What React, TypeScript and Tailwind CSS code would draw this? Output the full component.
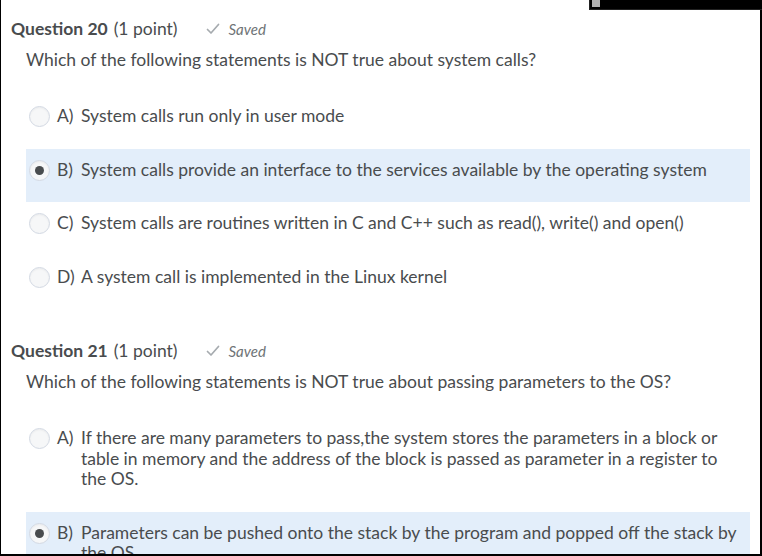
import React from "react";

const font = { fontFamily: "Lato, 'Noto Sans', sans-serif" };

function Check() {
  return (
    <svg width="14" height="14" viewBox="0 0 14 14" className="mr-[9px]">
      <path d="M1.5 7.5 L5 11 L12.5 2.5" fill="none" stroke="#a6abaf" strokeWidth="1.7" strokeLinecap="round" strokeLinejoin="round" />
    </svg>
  );
}

function Radio({ checked }: { checked?: boolean }) {
  return (
    <div className="h-[20px] shrink-0">
      <div className="w-[21px] h-[21px] rounded-full border border-[#d3d9e3] bg-[#f6f7f8] flex items-center justify-center shadow-[inset_0_1px_2px_rgba(0,0,0,0.05)]">
        {checked && <div className="w-[9px] h-[9px] rounded-full bg-[#494c4e]" />}
      </div>
    </div>
  );
}

function Option({ letter, text, checked }: { letter: string; text: string; checked?: boolean }) {
  return (
    <div className={`flex items-start pl-[3px] pr-[10px] pt-[11px] pb-[22px] ${checked ? "bg-[#e3eefa]" : ""}`}>
      <Radio checked={checked} />
      <div className="ml-[7px] w-[24px] shrink-0 leading-[20.5px]">{letter}</div>
      <div className="leading-[20.5px]">{text}</div>
    </div>
  );
}

function Question({ num, text, options, checked }: { num: number; text: string; options: [string, string][]; checked: number }) {
  return (
    <div>
      <div className="flex items-center pl-[10px] h-[24px]">
        <span className="text-[17.5px] font-bold text-[#494c4e]">Question {num}</span>
        <span className="text-[17.5px] text-[#494c4e] ml-[6px]">(1 point)</span>
        <span className="ml-[28px] flex items-center">
          <Check />
          <span className="italic text-[15px] text-[#6e7376]">Saved</span>
        </span>
      </div>
      <div className="pl-[25px] mt-[9px] text-[17.5px] leading-[20px] text-[#494c4e]">{text}</div>
      <div className="ml-[25px] mr-[10px] mt-[25px] text-[17.5px] text-[#494c4e]">
        {options.map(([l, t], i) => (
          <Option key={l} letter={l} text={t} checked={i === checked} />
        ))}
      </div>
    </div>
  );
}

export default function App() {
  return (
    <div className="w-[762px] h-[556px] bg-black relative overflow-hidden" style={font}>
      <div className="ml-[1px] mr-[2px] h-[554px] bg-white overflow-hidden pt-[17px]">
        <Question
          num={20}
          text="Which of the following statements is NOT true about system calls?"
          checked={1}
          options={[
            ["A)", "System calls run only in user mode"],
            ["B)", "System calls provide an interface to the services available by the operating system"],
            ["C)", "System calls are routines written in C and C++ such as read(), write() and open()"],
            ["D)", "A system call is implemented in the Linux kernel"],
          ]}
        />
        <div className="h-[30px]" />
        <Question
          num={21}
          text="Which of the following statements is NOT true about passing parameters to the OS?"
          checked={1}
          options={[
            ["A)", "If there are many parameters to pass,the system stores the parameters in a block or table in memory and the address of the block is passed as parameter in a register to the OS."],
            ["B)", "Parameters can be pushed onto the stack by the program and popped off the stack by the OS."],
          ]}
        />
      </div>
      <div className="absolute top-0 right-0 w-[173px] h-[10px] bg-black border-l border-b border-[#222]">
        <div className="ml-[2px] w-[8px] h-[7px] bg-[#b0b0b0]" />
      </div>
    </div>
  );
}
